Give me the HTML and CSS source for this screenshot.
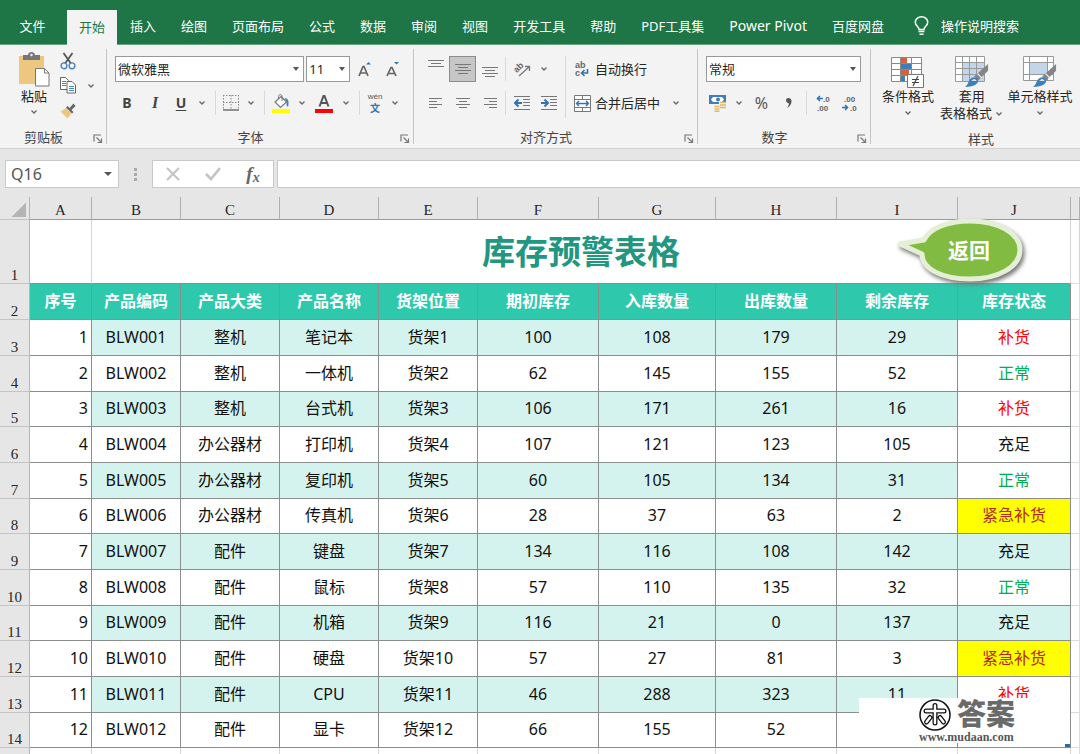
FILE: index.html
```html
<!DOCTYPE html>
<html lang="zh-CN">
<head>
<meta charset="utf-8">
<title>库存预警表格</title>
<link rel="stylesheet" href="styles.css">
</head>
<body>
<svg class="defs" aria-hidden="true">
  <symbol id="chev" viewBox="0 0 8 8"><path d="M1.5 2.5 4 5 6.500 2.500" fill="none" stroke="#666" stroke-width="1.300"/></symbol>
  <symbol id="launch" viewBox="0 0 10 10"><path d="M1 7.500V1h7M3.500 3.500 8 8M8.500 4.500v4h-4" fill="none" stroke="#777" stroke-width="1.200"/></symbol>
  <symbol id="brush" viewBox="0 0 26 26"><path d="M25 1 10.500 14l4.500 4L25 8z" fill="#858585"/><path d="m14 11 4.500 4.500" stroke="#f3f3f3" stroke-width="1.300"/><path d="M1 25c3-2 3-4.500 5-7.500 2-3.500 7-3.500 8.500-.5 1.500 4-3 8-13.500 8z" fill="#3f7fb8"/><path d="M7.500 18.500c2-2.500 5.500-2 5.500.5-2-1.200-3.200-.2-5.500-.5z" fill="#fff"/></symbol>
</svg>

<header>
  <nav class="tabs">
    <button class="tab file">文件</button>
    <button class="tab active">开始</button>
    <button class="tab">插入</button>
    <button class="tab">绘图</button>
    <button class="tab">页面布局</button>
    <button class="tab">公式</button>
    <button class="tab">数据</button>
    <button class="tab">审阅</button>
    <button class="tab">视图</button>
    <button class="tab">开发工具</button>
    <button class="tab">帮助</button>
    <button class="tab">PDF工具集</button>
    <button class="tab latin">Power Pivot</button>
    <button class="tab">百度网盘</button>
    <button class="tab search"><svg width="15" height="20" viewBox="0 0 15 20" fill="none" stroke="#fff" stroke-width="1.500"><path d="M5 13.500c0-3-3.700-3.500-3.700-7.300a6.200 5.400 0 0 1 12.400 0c0 3.800-3.700 4.300-3.700 7.300zM4.500 15.500h6M5.500 18.200h4"/></svg>操作说明搜索</button>
  </nav>

  <div class="ribbon">
    <section class="group clipboard">
      <div class="clip-body">
        <button class="paste"><svg width="32" height="35" viewBox="0 0 32 35"><path d="M1 4h25v28H1z" fill="#edc77f"/><path d="M5 8V3h5c0-4 7-4 7 0h5v5z" fill="#777"/><circle cx="13.500" cy="3" r="1.200" fill="#f3f3f3"/><path d="M17.500 16.500h9l4.500 4.500v13H17.500z" fill="#fff" stroke="#777"/><path d="M26.500 16.500V21H31" fill="none" stroke="#777"/></svg><span>粘贴</span><svg class="chev"><use href="#chev"/></svg></button>
        <div class="clip-tools">
          <button class="btn" aria-label="剪切"><svg width="16" height="18" viewBox="0 0 16 18" fill="none"><path d="M3.500 1 11 11.500M12.500 1 5 11.500" stroke="#555" stroke-width="1.800"/><circle cx="4" cy="13.800" r="2.900" stroke="#4a86bb" stroke-width="1.400"/><circle cx="12" cy="13.800" r="2.900" stroke="#4a86bb" stroke-width="1.400"/></svg></button>
          <button class="btn" aria-label="复制"><svg width="16" height="17" viewBox="0 0 16 17"><path d="M.5.500h5l3 3v9h-8z" fill="#fff" stroke="#666"/><path d="M7 4.500h5l3.500 3.500v8H7z" fill="#fff" stroke="#666"/><path d="M2 4.500h4M2 6.500h4M2 8.500h4M9 9.500h5M9 11.500h5M9 13.500h5" stroke="#4a86bb"/></svg></button>
          <button class="btn" aria-label="格式刷"><svg width="16" height="16" viewBox="0 0 16 16"><path d="M.5 8.500 6 5l5.500 5.500-4 5z" fill="#edc77f"/><path d="m6 4.500 6 6 1.500-1.500-2-2L15.500 3 13.500.500 9.500 5 7.500 3z" fill="#666"/></svg></button>
        </div>
        <button class="btn dd" aria-label="复制选项"><svg class="chev"><use href="#chev"/></svg></button>
      </div>
      <footer><span>剪贴板</span><button class="launch" aria-label="剪贴板设置"><svg><use href="#launch"/></svg></button></footer>
    </section>

    <section class="group font">
      <div class="row boxes">
        <span class="combo name"><select aria-label="字体"><option>微软雅黑</option></select></span>
        <span class="combo size"><select aria-label="字号"><option>11</option></select></span>
        <button class="btn w26" aria-label="增大字号"><svg width="14" height="16" viewBox="0 0 14 16"><path d="M1 15 5 5.500h1L10 15M2.500 12h6" fill="none" stroke="#666" stroke-width="1.700"/><path d="M8 3.500 10.500 1 13 3.500z" fill="#2f75b5"/></svg></button>
        <button class="btn w26" aria-label="减小字号"><svg width="14" height="16" viewBox="0 0 14 16"><path d="M1 15 5 6.500h1L10 15M2.500 12.500h6" fill="none" stroke="#666" stroke-width="1.700"/><path d="M8 1h5l-2.500 2.500z" fill="#2f75b5"/></svg></button>
      </div>
      <div class="row">
        <button class="btn w28 bold">B</button>
        <button class="btn w28 italic">I</button>
        <button class="btn w24 under">U</button>
        <button class="btn dd" aria-label="下划线选项"><svg class="chev"><use href="#chev"/></svg></button>
        <i class="sep"></i>
        <button class="btn w22" aria-label="边框"><svg width="16" height="16" viewBox="0 0 16 16" fill="none"><path d="M.5 0v15M8 0v15M15.500 0v15M0 .5h16M0 7.500h16" stroke="#888" stroke-dasharray="1.500 1.500"/><path d="M0 15h16" stroke="#777" stroke-width="1.600"/></svg></button>
        <button class="btn dd" aria-label="边框选项"><svg class="chev"><use href="#chev"/></svg></button>
        <i class="sep"></i>
        <button class="btn w24" aria-label="填充颜色"><svg width="18" height="19" viewBox="0 0 18 19"><path d="m9 2.500 5.500 5.500-6 5.500L3 8z" fill="#fff" stroke="#777" stroke-width="1.200"/><path d="M6.500 5V2.500c0-2.500 3.500-2.500 3.500 0V7" fill="none" stroke="#777"/><path d="M12.500 4c3.500 0 5 3 3.500 9-1.500-1-2-3-1-5z" fill="#3f7fb8"/><path d="M0 15h18v4H0z" fill="#ff0"/></svg></button>
        <button class="btn dd" aria-label="填充选项"><svg class="chev"><use href="#chev"/></svg></button>
        <button class="btn w26" aria-label="字体颜色"><svg width="18" height="19" viewBox="0 0 18 19"><path d="M4.500 12.500 8.500 2h1l4 10.500M6 9h6" fill="none" stroke="#555" stroke-width="2"/><path d="M0 15h18v4H0z" fill="#f00"/></svg></button>
        <button class="btn dd" aria-label="颜色选项"><svg class="chev"><use href="#chev"/></svg></button>
        <i class="sep"></i>
        <button class="btn w22 phonetic"><span>wén</span><b>文</b></button>
        <button class="btn dd" aria-label="拼音选项"><svg class="chev"><use href="#chev"/></svg></button>
      </div>
      <footer><span>字体</span><button class="launch" aria-label="字体设置"><svg><use href="#launch"/></svg></button></footer>
    </section>

    <section class="group align">
      <div class="split">
        <div class="rows">
          <div class="row">
            <button class="btn w27 up" aria-label="顶端对齐"><svg class="lines"><path d="M0 2.500h16M3 5.500h10M0 8.500h16"/></svg></button>
            <button class="btn w27 on" aria-label="垂直居中"><svg class="lines"><path d="M0 3.500h16M3 6.500h10M0 9.500h16M3 12.500h10"/></svg></button>
            <button class="btn w27 down" aria-label="底端对齐"><svg class="lines"><path d="M0 4.500h16M3 7.500h10M0 10.500h16M3 13.500h10"/></svg></button>
            <i class="sep thin"></i>
            <button class="btn w27" aria-label="方向"><svg width="18" height="18" viewBox="0 0 18 18"><g transform="rotate(-45 8 9)"><text x="2" y="9" class="ab">ab</text></g><path d="M6 16 16 7M12 6.500h4.500V11" fill="none" stroke="#777" stroke-width="1.300"/></svg></button>
            <button class="btn dd" aria-label="方向选项"><svg class="chev"><use href="#chev"/></svg></button>
          </div>
          <div class="row">
            <button class="btn w27" aria-label="左对齐"><svg class="lines"><path d="M1 3.500h13M1 6.500h8M1 9.500h13M1 12.500h8"/></svg></button>
            <button class="btn w27" aria-label="居中"><svg class="lines"><path d="M1 3.500h14M4 6.500h8M1 9.500h14M4 12.500h8"/></svg></button>
            <button class="btn w27" aria-label="右对齐"><svg class="lines"><path d="M2 3.500h13M7 6.500h8M2 9.500h13M7 12.500h8"/></svg></button>
            <i class="sep thin"></i>
            <button class="btn w27" aria-label="减少缩进"><svg class="lines"><path d="M0 1.500h16M9 4.500h7M9 7.500h7M9 10.500h7M0 14.500h16"/><path class="blue" d="M8 8H2M4.500 4.500 1 8l3.500 3.500"/></svg></button>
            <button class="btn w27" aria-label="增加缩进"><svg class="lines"><path d="M0 1.500h16M9 4.500h7M9 7.500h7M9 10.500h7M0 14.500h16"/><path class="blue" d="M0 8h6M3.500 4.500 7 8l-3.500 3.500"/></svg></button>
          </div>
        </div>
        <i class="sep tall"></i>
        <div class="rows">
          <div class="row"><button class="btn label"><svg width="17" height="18" viewBox="0 0 17 18"><text x="1" y="8" class="ab">ab</text><text x="1" y="16" class="ab">c</text><path d="M13.500 9v4H8M10.500 10 7.500 13l3 3" fill="none" stroke="#2f75b5" stroke-width="1.600"/></svg>自动换行</button></div>
          <div class="row"><button class="btn label"><svg width="17" height="17" viewBox="0 0 17 17"><path d="M.5.500h16v16H.500zM8.500 0v4M8.500 13v4M0 4.500h17M0 12.500h17" fill="#fff" stroke="#777"/><path d="M3 8.500h11M5 6 2.500 8.500 5 11M12 6l2.500 2.500L12 11" fill="none" stroke="#2f75b5" stroke-width="1.400"/></svg>合并后居中</button><button class="btn dd merge-dd" aria-label="合并选项"><svg class="chev"><use href="#chev"/></svg></button></div>
        </div>
      </div>
      <footer><span>对齐方式</span><button class="launch" aria-label="对齐设置"><svg><use href="#launch"/></svg></button></footer>
    </section>

    <section class="group number">
      <div class="row"><span class="combo format"><select aria-label="数字格式"><option>常规</option></select></span></div>
      <div class="row">
        <button class="btn w24" aria-label="会计格式"><svg width="18" height="18" viewBox="0 0 18 18"><path d="M0 1h17v9H0z" fill="#3f7fb8"/><path d="M2 5.500 4 3h9l2 2.500L13 8H4z" fill="#fff"/><circle cx="9" cy="5.500" r="2" fill="#3f7fb8"/><path d="M10 8h7v9h-7zM5 12h5v6H5z" fill="#f3f3f3"/><path d="M11 8.500h6M11 11h6M11 13.500h6M5.500 12.500h5M5.500 15h5M5.500 17.300h5" stroke="#e3b967" stroke-width="1.500"/></svg></button>
        <button class="btn dd" aria-label="货币选项"><svg class="chev"><use href="#chev"/></svg></button>
        <button class="btn w27 pct">%</button>
        <button class="btn w27" aria-label="千位分隔"><svg width="8" height="12" viewBox="0 0 8 12"><path d="M1 3.300C1 0 6.500 0 6.500 4c0 3-1.500 5.500-4.500 7 1-1.500 2-3 2-4.800C2.500 6.500 1 5 1 3.300z" fill="#555"/></svg></button>
        <i class="sep"></i>
        <button class="btn w26" aria-label="增加小数位"><svg width="16" height="18" viewBox="0 0 16 18"><text x="7" y="8" class="dec">.0</text><text x="1" y="17" class="dec">.00</text><path d="M7 4.500H2M4 2 1.500 4.500 4 7" fill="none" stroke="#2f75b5" stroke-width="1.600"/></svg></button>
        <button class="btn w26" aria-label="减少小数位"><svg width="16" height="18" viewBox="0 0 16 18"><text x="2" y="8" class="dec">.00</text><text x="8" y="17" class="dec">.0</text><path d="M0 13.500h5M3 11l2.500 2.500L3 16" fill="none" stroke="#2f75b5" stroke-width="1.600"/></svg></button>
      </div>
      <footer><span>数字</span><button class="launch" aria-label="数字设置"><svg><use href="#launch"/></svg></button></footer>
    </section>

    <section class="group styles">
      <div class="big-row">
        <button class="big"><svg width="34" height="32" viewBox="0 0 34 32"><path d="M.5 1.500h30v24H.500z" fill="#fff"/><path d="M10 2h6v5h-6zM10 14h8v5h-8z" fill="#d9603b"/><path d="M10 8h10v5H10zM10 20h4v5h-4z" fill="#3f7fb8"/><path d="M.5 1.500h30v24H.500zM9.500 2v23M20.500 2v23M1 7.500h29M1 13.500h29M1 19.500h29" fill="none" stroke="#888"/><path d="M16.500 18.500h16v13h-16z" fill="#fff" stroke="#777"/><path d="M21 23.500h7M21 26.500h7M27 20l-5 10" stroke="#444" stroke-width="1.200"/></svg><span>条件格式</span><svg class="chev"><use href="#chev"/></svg></button>
        <button class="big"><svg width="34" height="32" viewBox="0 0 34 32"><path d="M.5.500h29v25H.500z" fill="#fff"/><path d="M8 7h21v18H8z" fill="#c3d5e8"/><path d="M.5.500h29v25H.500zM7.500 1v24M14.500 1v24M21.500 1v24M1 6.500h28M1 12.500h28M1 18.500h28" fill="none" stroke="#999"/><svg x="9" y="7" width="25" height="25"><use href="#brush"/></svg></svg><span>套用</span><span>表格格式 <svg class="chev"><use href="#chev"/></svg></span></button>
        <button class="big"><svg width="34" height="32" viewBox="0 0 34 32"><path d="M.5.500h30v24H.500z" fill="#fff"/><path d="M7 7h17v11H7z" fill="#c3d5e8"/><path d="M.5.500h30v24H.500zM6.500 1v23M24.500 1v23M1 6.500h29M1 18.500h29" fill="none" stroke="#999"/><svg x="9" y="7" width="25" height="25"><use href="#brush"/></svg></svg><span>单元格样式</span><svg class="chev"><use href="#chev"/></svg></button>
      </div>
      <footer><span>样式</span></footer>
    </section>
  </div>
</header>

<div class="formula-bar">
  <span class="combo namebox"><input aria-label="名称框" value="Q16"></span>
  <i class="grip"></i>
  <div class="fx">
    <button class="btn" aria-label="取消"><svg width="14" height="14" viewBox="0 0 14 14"><path d="m1 1 12 12M13 1 1 13" stroke="#c3c3c3" stroke-width="2"/></svg></button>
    <button class="btn" aria-label="输入"><svg width="16" height="14" viewBox="0 0 16 14"><path d="m1 7 5 5 9-11" fill="none" stroke="#c3c3c3" stroke-width="2.600"/></svg></button>
    <button class="btn fn"><i>f</i><small>x</small></button>
  </div>
  <input class="formula" aria-label="编辑栏">
</div>

<main class="sheet">
  <table>
    <colgroup><col class="c-head"><col class="c-a"><col class="c-b"><col class="c-c"><col class="c-c"><col class="c-c"><col class="c-f"><col class="c-g"><col class="c-f"><col class="c-f"><col class="c-j"><col></colgroup>
    <thead>
      <tr class="letters"><th class="corner"></th><th>A</th><th>B</th><th>C</th><th>D</th><th>E</th><th>F</th><th>G</th><th>H</th><th>I</th><th>J</th><th></th></tr>
      <tr class="title"><th>1</th><td></td><td colspan="9">库存预警表格</td><td></td></tr>
      <tr class="fields"><th>2</th><td>序号</td><td>产品编码</td><td>产品大类</td><td>产品名称</td><td>货架位置</td><td>期初库存</td><td>入库数量</td><td>出库数量</td><td>剩余库存</td><td>库存状态</td><td></td></tr>
    </thead>
    <tbody>
      <tr><th>3</th><td>1</td><td>BLW001</td><td>整机</td><td>笔记本</td><td>货架1</td><td>100</td><td>108</td><td>179</td><td>29</td><td class="low">补货</td><td></td></tr>
      <tr><th>4</th><td>2</td><td>BLW002</td><td>整机</td><td>一体机</td><td>货架2</td><td>62</td><td>145</td><td>155</td><td>52</td><td class="ok">正常</td><td></td></tr>
      <tr><th>5</th><td>3</td><td>BLW003</td><td>整机</td><td>台式机</td><td>货架3</td><td>106</td><td>171</td><td>261</td><td>16</td><td class="low">补货</td><td></td></tr>
      <tr><th>6</th><td>4</td><td>BLW004</td><td>办公器材</td><td>打印机</td><td>货架4</td><td>107</td><td>121</td><td>123</td><td>105</td><td>充足</td><td></td></tr>
      <tr><th>7</th><td>5</td><td>BLW005</td><td>办公器材</td><td>复印机</td><td>货架5</td><td>60</td><td>105</td><td>134</td><td>31</td><td class="ok">正常</td><td></td></tr>
      <tr><th>8</th><td>6</td><td>BLW006</td><td>办公器材</td><td>传真机</td><td>货架6</td><td>28</td><td>37</td><td>63</td><td>2</td><td class="urgent">紧急补货</td><td></td></tr>
      <tr><th>9</th><td>7</td><td>BLW007</td><td>配件</td><td>键盘</td><td>货架7</td><td>134</td><td>116</td><td>108</td><td>142</td><td>充足</td><td></td></tr>
      <tr><th>10</th><td>8</td><td>BLW008</td><td>配件</td><td>鼠标</td><td>货架8</td><td>57</td><td>110</td><td>135</td><td>32</td><td class="ok">正常</td><td></td></tr>
      <tr><th>11</th><td>9</td><td>BLW009</td><td>配件</td><td>机箱</td><td>货架9</td><td>116</td><td>21</td><td>0</td><td>137</td><td>充足</td><td></td></tr>
      <tr><th>12</th><td>10</td><td>BLW010</td><td>配件</td><td>硬盘</td><td>货架10</td><td>57</td><td>27</td><td>81</td><td>3</td><td class="urgent">紧急补货</td><td></td></tr>
      <tr><th>13</th><td>11</td><td>BLW011</td><td>配件</td><td>CPU</td><td>货架11</td><td>46</td><td>288</td><td>323</td><td>11</td><td class="low">补货</td><td></td></tr>
      <tr><th>14</th><td>12</td><td>BLW012</td><td>配件</td><td>显卡</td><td>货架12</td><td>66</td><td>155</td><td>52</td><td></td><td class="last"></td><td></td></tr>
    </tbody>
    <tfoot>
      <tr><th></th><td></td><td></td><td></td><td></td><td></td><td></td><td></td><td></td><td></td><td></td><td></td></tr>
    </tfoot>
  </table>
  <a class="callout" href="#">
    <svg width="136" height="70" viewBox="0 0 136 70"><path d="M10 25 34 21C40 9 58 2 80 2c28 0 50 12 50 29S108 60 80 60 32 50 32 35z" fill="#82bb41" stroke="#e4efd6" stroke-width="5" stroke-linejoin="round"/></svg>
    <span>返回</span>
  </a>
  <div class="watermark">
    <svg width="32" height="32" viewBox="0 0 32 32" fill="none" stroke="#111"><circle cx="16" cy="16" r="15" stroke-width="1.500"/><g stroke-linecap="round" stroke-width="5"><path d="M7 12h18M16 6.500V24M11 18.500 7.500 23M21 18.500l3.500 4.500"/></g><g stroke="#fff" stroke-linecap="round" stroke-width="2.400"><path d="M7 12h18M16 6.500V24M11 18.500 7.500 23M21 18.500l3.500 4.500"/></g></svg>
    <strong>答案</strong>
    <small>www.mudaan.com</small>
  </div>
</main>
</body>
</html>
```

FILE: styles.css
```css
* { box-sizing: border-box; }
body {
  margin: 0;
  height: 100vh;
  overflow: hidden;
  display: flex;
  flex-direction: column;
  background: #e6e6e6;
  color: #262626;
  font: 13px/18px "Noto Sans", "Noto Sans CJK SC", sans-serif;
}
button, input, select { font: inherit; color: inherit; }
button { border: 0; padding: 0; background: none; white-space: nowrap; }
svg { flex: none; }
.defs { display: none; }

/* Tabs */
.tabs { display: flex; gap: 1px; height: 45px; padding-top: 10px; background: #1e7545; border-bottom: 1px solid #69a384; }
.tab { flex: none; height: 34px; padding: 0 12px 2px; color: #fff; }
.tab.file { width: 66px; padding-right: 20px; padding-left: 19px; }
.tab.active { height: 35px; background: #f3f3f3; color: #1e7545; }
.tab.latin { font-size: 14px; }
.tab.search { display: flex; align-items: center; gap: 12px; padding-left: 17px; }

/* Ribbon */
.ribbon { display: flex; height: 104px; background: #f3f3f3; border-bottom: 1px solid #d0d0d0; }
.group { position: relative; flex: none; display: flex; flex-direction: column; gap: 8px; padding: 11px 8px 0; }
.group:not(.styles)::after { content: ""; position: absolute; right: 0; top: 4px; bottom: 4px; width: 1px; background: #c4c4c4; }
.clipboard { width: 107px; }
.font { width: 307px; }
.align { width: 284px; }
.number { width: 173px; }
.styles { width: 216px; }
.group footer { display: flex; align-items: center; height: 18px; margin-top: auto; margin-right: -4px; margin-bottom: 2px; color: #444; }
.group footer span { flex: 1; padding-right: 14px; text-align: center; }
.styles footer span { padding: 0; }
.launch { display: flex; width: 10px; height: 10px; margin-top: 3px; }
.launch svg { width: 10px; height: 10px; }
.row { display: flex; align-items: center; height: 26px; }
.rows { display: flex; flex-direction: column; gap: 8px; }
.split { display: flex; }
.btn { display: flex; align-items: center; justify-content: center; height: 26px; }
.w22 { width: 22px; }
.w24 { width: 24px; }
.w26 { width: 26px; }
.w27 { width: 27px; }
.w28 { width: 28px; }
.dd { width: 18px; }
.chev { width: 8px; height: 8px; }
.sep { flex: none; width: 1px; height: 24px; margin: 0 4px; background: #d8d8d8; }
.sep.thin { margin: 0 2px; }
.sep.tall { height: 62px; margin: 0 5px 0 3px; }
.on { background: #c6c6c6; border: 1px solid #8c8c8c; }
.up { align-items: flex-start; padding-top: 2px; }
.down { align-items: flex-end; padding-bottom: 3px; }
.lines { width: 16px; height: 16px; fill: none; stroke: #777; }
.lines .blue { stroke: #2f75b5; stroke-width: 2; }
.ab { font: bold 9px/9px "Liberation Sans", sans-serif; fill: #666; }
.dec { font: bold 8px/8px "Liberation Sans", sans-serif; fill: #666; }
.bold, .italic, .under { font-size: 14px; font-weight: 700; color: #444; }
.italic { font-family: "Liberation Serif", serif; font-style: italic; font-size: 16px; }
.under { text-decoration: underline; text-underline-offset: 2px; }
.pct { font-size: 16px; color: #555; }
.phonetic { flex-direction: column; color: #555; font: 8px/9px "Liberation Sans", sans-serif; }
.phonetic b { font: bold 10px/14px "Noto Sans CJK SC", sans-serif; color: #2f75b5; }
.label { gap: 4px; padding-left: 3px; }
.merge-dd { margin-left: 7px; }

.combo { position: relative; display: flex; height: 26px; }
.combo select, .combo input { appearance: none; width: 100%; padding: 0 2px; border: 1px solid #999; border-radius: 0; background: #fff; outline: 0; }
.combo::after { content: ""; position: absolute; right: 5px; top: 11px; border: 3px solid transparent; border-top: 4px solid #555; border-bottom: 0; }
.boxes { gap: 2px; }
.combo.name { width: 190px; }
.combo.size { width: 44px; }
.combo.format { width: 155px; }
.font .row:nth-child(2) { margin-left: -2px; }

.clipboard { gap: 0; padding-top: 3px; }
.clip-body { display: grid; grid-template-columns: 40px 28px 16px; align-items: start; margin-left: 6px; }
.paste { display: flex; flex-direction: column; align-items: center; padding-top: 4px; }
.paste .chev { margin-top: 3px; }
.clip-tools { display: flex; flex-direction: column; align-items: center; }
.clip-tools .btn { height: 25px; }
.clip-tools + .dd { margin-top: 25px; }

.big-row { display: flex; gap: 4px; margin-left: 1px; }
.big { display: flex; flex: none; flex-direction: column; align-items: center; min-width: 56px; line-height: 17px; }
.big > .chev { margin-top: 4px; }

/* Formula bar */
.formula-bar { display: flex; align-items: center; flex: none; height: 48px; padding: 2px 0 0 5px; }
.combo.namebox { width: 114px; height: 28px; font-size: 16px; color: #555; }
.namebox::after { top: 12px; border-width: 4px 4px 0; right: 7px; }
.combo.namebox input { padding-left: 5px; }
.combo.namebox input, .fx, .formula { border: 1px solid #c9c9c9; background: #fff; }
.grip { width: 3px; height: 13px; margin: 0 15px; background: repeating-linear-gradient(#aaa 0 3px, transparent 3px 5px); }
.fx { display: flex; align-items: center; justify-content: space-around; width: 122px; height: 28px; }
.fx .btn { width: 40px; }
.fn { font-family: "Liberation Serif", serif; font-weight: 700; color: #666; }
.fn i { font-size: 19px; }
.fn small { font-size: 14px; font-style: italic; align-self: flex-end; }
.formula { flex: 1; height: 28px; margin-left: 3px; border-right: 0; outline: 0; }

/* Sheet */
.sheet { position: relative; flex: 1; min-height: 0; }
table { width: 100%; table-layout: fixed; border-collapse: separate; border-spacing: 0; background: #fff; }
.c-head { width: 30px; }
.c-a { width: 62px; }
.c-b { width: 89px; }
.c-c { width: 99px; }
.c-f { width: 121px; }
.c-g { width: 117px; }
.c-j { width: 113px; }
th, td { padding: 0; border: 0 solid #8a8f8e; border-width: 0 1px 1px 0; text-align: center; white-space: nowrap; overflow: hidden; }
th { background: #e6e6e6; font: 15px/16px "Liberation Serif", serif; }
td:last-child { border-color: #dcdcdc; }
tr th:first-child { vertical-align: bottom; border-right-color: #b5b5b5; border-bottom-color: #c4c4c4; }
.letters th { height: 23px; padding-top: 4px; border-right-color: #b0b0b0; border-bottom-color: #9a9a9a; }
.letters .corner { background: linear-gradient(135deg, transparent 50%, #b4b4b4 50%) 12px 6px / 14px 14px no-repeat #e6e6e6; }
.title td { height: 64px; border-right-color: #d4d4d4; color: #22967f; font-size: 33px; font-weight: 700; }
.fields td { height: 36px; padding-bottom: 2px; font-size: 16px; font-weight: 700; color: #fff; background: #2ec8ac; }
.fields td:last-child { background: #fff; }
tbody td { height: 36px; padding-bottom: 2px; font-size: 16px; line-height: 22px; color: #111; }
tbody tr:nth-child(3n) td { height: 35px; }
tbody td:nth-child(2) { padding-right: 3px; text-align: right; }
tbody tr:nth-child(odd) td:nth-child(n+3):not(:last-child, .low, .ok) { background: #d5f3ee; }
tfoot td { height: 20px; border-color: #d4d4d4; }
tbody .low { color: #f00; }
tbody .ok { color: #00b050; }
tbody .urgent { background: #ff0; color: #b52a1c; }
tbody .last { background: linear-gradient(#2f6aa5, #2f6aa5) right bottom / 5px 3px no-repeat; }

.callout { position: absolute; left: 890px; top: 22px; color: #fff; font-size: 21px; font-weight: 700; text-decoration: none; }
.callout svg { display: block; filter: drop-shadow(2px 3px 2px #777); }
.callout span { position: absolute; left: 58px; top: 22px; }

.watermark { position: absolute; right: 10px; bottom: 11px; width: 211px; height: 45px; padding: 1px 0 0 60px; display: grid; grid-template-columns: 32px auto; grid-template-rows: 32px 12px; column-gap: 6px; background: #fff; }
.watermark strong { font-size: 29px; line-height: 30px; font-weight: 900; color: #6a6a6a; }
.watermark small { grid-column: 1 / 3; font: bold 12px/12px "Liberation Serif", serif; color: #555; }
```
